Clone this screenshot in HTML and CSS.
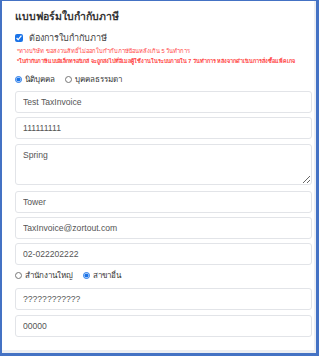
FILE: index.html
```html
<!DOCTYPE html>
<html lang="th">
<head>
    <meta charset="UTF-8">
    <title>แบบฟอร์มใบกำกับภาษี</title>
    <link rel="stylesheet" href="styles.css">
</head>
<body>
<div class="frame">
    <div class="card">
        <h2 class="title">แบบฟอร์มใบกำกับภาษี</h2>
        <label class="check">
            <input type="checkbox" checked>
            <span>ต้องการใบกำกับภาษี</span>
        </label>
        <p class="note first">*ทางบริษัท ขอสงวนสิทธิ์ไม่ออกใบกำกับภาษีย้อนหลังเกิน 5 วันทำการ</p>
        <p class="note bold">*ใบกำกับภาษีแบบอิเล็กทรอนิกส์ จะถูกส่งไปที่อีเมลผู้ใช้งานในระบบภายใน 7 วันทำการ หลังจากดำเนินการสั่งซื้อแพ็คเกจ</p>

        <div class="radios">
            <label><input type="radio" name="type" checked> นิติบุคคล</label>
            <label><input type="radio" name="type"> บุคคลธรรมดา</label>
        </div>

        <div class="fields">
            <input type="text" value="Test TaxInvoice">
            <input type="text" value="111111111">
            <textarea>Spring</textarea>
            <input type="text" value="Tower">
            <input type="text" value="TaxInvoice@zortout.com">
            <input type="text" value="02-022202222">
        </div>

        <div class="radios branch">
            <label><input type="radio" name="branch"> สำนักงานใหญ่</label>
            <label><input type="radio" name="branch" checked> สาขาอื่น</label>
        </div>

        <div class="fields">
            <input type="text" value="????????????">
            <input type="text" value="00000">
        </div>
    </div>
</div>
</body>
</html>
```

FILE: styles.css
```css
body {
    margin: 0;
    background: white;
    font-family: "Liberation Sans", Arial, sans-serif;
    color: #333;
}
.frame {
    width: 319px;
    height: 356px;
    box-sizing: border-box;
    border: 2px solid #4472c4;
    border-top-width: 1px;
    border-right-width: 3px;
    border-bottom-width: 3px;
}
.card {
    height: 100%;
    box-sizing: border-box;
    padding: 7px 2px 0 13px;
    border-right: 2px solid #eceef2;
    border-bottom: 3px solid #eceef2;
}
.title {
    margin: 0;
    font-size: 10.5px;
    line-height: 16px;
    font-weight: bold;
    color: #333;
}
.check {
    display: flex;
    align-items: center;
    font-size: 9px;
    color: #444;
    height: 14px;
    margin-top: 7px;
}
.check input {
    width: 8px;
    height: 8px;
    margin: 0 6px 0 0;
    accent-color: #1a73e8;
}
.note {
    margin: 0;
    color: #f44;
    font-size: 5.8px;
    line-height: 10px;
    padding-left: 2px;
    white-space: nowrap;
}
.note.first {
    margin-top: 1px;
}
.note.bold {
    font-weight: bold;
    font-size: 5.5px;
}
.radios {
    display: flex;
    gap: 10px;
    font-size: 8px;
    color: #333;
    height: 14px;
    align-items: center;
    margin: 6px 0 5px;
}
.radios label {
    display: flex;
    align-items: center;
    gap: 3px;
}
.radios input {
    width: 7px;
    height: 7px;
    margin: 0;
    accent-color: #1a73e8;
}
.radios.branch {
    margin: 3.5px 0 5.3px;
}
.fields {
    display: flex;
    flex-direction: column;
    gap: 4.3px;
}
.fields input,
.fields textarea {
    width: 297px;
    height: 22px;
    box-sizing: border-box;
    border: 1px solid #e2e4e8;
    border-radius: 3px;
    padding: 0 7px;
    font-family: "Liberation Sans", Arial, sans-serif;
    font-size: 8.6px;
    color: #555;
    background: white;
    margin: 0;
}
.fields textarea {
    height: 41.5px;
    padding: 5px 7px;
    margin-bottom: 1.5px;
    resize: vertical;
}
```
